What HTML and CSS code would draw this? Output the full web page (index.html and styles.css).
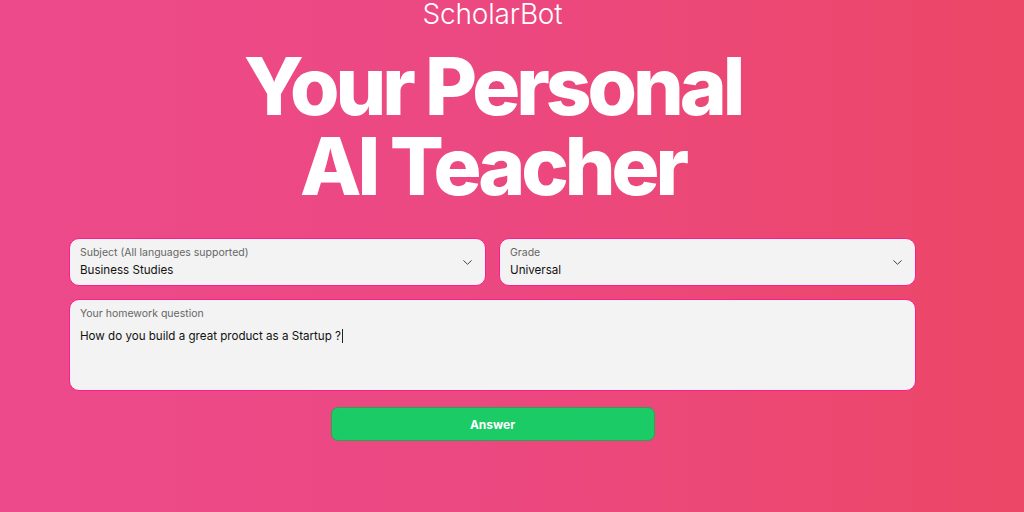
FILE: index.html
```html
<!DOCTYPE html>
<html lang="en">
<head>
<meta charset="utf-8">
<title>ScholarBot</title>
<link rel="stylesheet" href="styles.css">
</head>
<body>
<main class="page">
  <div class="brand">ScholarBot</div>
  <h1 class="title">Your Personal<br>AI Teacher</h1>
  <form class="form">
    <div class="row">
      <div class="field select">
        <div class="field-text">
          <span class="label">Subject (All languages supported)</span>
          <span class="value">Business Studies</span>
        </div>
        <svg class="chev" width="9" height="5" viewBox="0 0 9 5"><path d="M0.7 0.7l3.8 3.6 3.8-3.6" fill="none" stroke="#444" stroke-width="1" stroke-linecap="round" stroke-linejoin="round"/></svg>
      </div>
      <div class="field select">
        <div class="field-text">
          <span class="label">Grade</span>
          <span class="value">Universal</span>
        </div>
        <svg class="chev" width="9" height="5" viewBox="0 0 9 5"><path d="M0.7 0.7l3.8 3.6 3.8-3.6" fill="none" stroke="#444" stroke-width="1" stroke-linecap="round" stroke-linejoin="round"/></svg>
      </div>
    </div>
    <div class="field area">
      <span class="label">Your homework question</span>
      <span class="value question">How do you build a great product as a Startup ?<span class="caret"></span></span>
    </div>
    <div class="actions">
      <button type="button" class="btn">Answer</button>
    </div>
  </form>
</main>
</body>
</html>
```

FILE: styles.css
```css
* { box-sizing: border-box; }
html, body { height: 100%; }
body {
  margin: 0;
  font-family: Inter, "Noto Sans", "Liberation Sans", sans-serif;
  background: linear-gradient(90deg, #ec4a8b 0%, #ec4880 50%, #ec4766 100%);
  color: #fff;
  overflow: hidden;
}
.page {
  width: 985px;
  display: flex;
  flex-direction: column;
  align-items: center;
}
.brand {
  font-size: 28px;
  font-weight: 300;
  line-height: 28px;
  letter-spacing: -0.2px;
}
.title {
  margin: 18px 0 0;
  font-size: 80px;
  font-weight: 800;
  line-height: 80px;
  letter-spacing: -4.1px;
  text-align: center;
}
.form {
  width: 847px;
  margin-top: 32px;
  display: flex;
  flex-direction: column;
  gap: 13px;
}
.row {
  display: flex;
  gap: 13px;
}
.field {
  background: #f3f3f3;
  border: 1px solid #ff1c8e;
  border-radius: 10px;
  color: #111;
}
.select {
  flex: 1;
  height: 48px;
  display: flex;
  align-items: center;
  justify-content: space-between;
  padding: 0 13px 0 10px;
}
.field-text {
  display: flex;
  flex-direction: column;
  gap: 2px;
}
.label {
  font-size: 10.5px;
  color: #666;
  line-height: 14px;
}
.value {
  font-size: 11.6px;
  line-height: 16px;
  color: #111;
}
.area {
  height: 92px;
  padding: 7px 10px;
  display: flex;
  flex-direction: column;
  gap: 7px;
}
.caret {
  display: inline-block;
  width: 1px;
  height: 14px;
  background: #222;
  vertical-align: -3px;
  margin-left: 1px;
}
.actions {
  display: flex;
  justify-content: center;
  padding-top: 3px;
}
.btn {
  width: 324px;
  height: 34px;
  border: 1px solid #3c9a55;
  border-radius: 7px;
  background: #1acb66;
  color: #fff;
  font-family: Inter, "Noto Sans", sans-serif;
  font-weight: 700;
  font-size: 12px;
}
```
